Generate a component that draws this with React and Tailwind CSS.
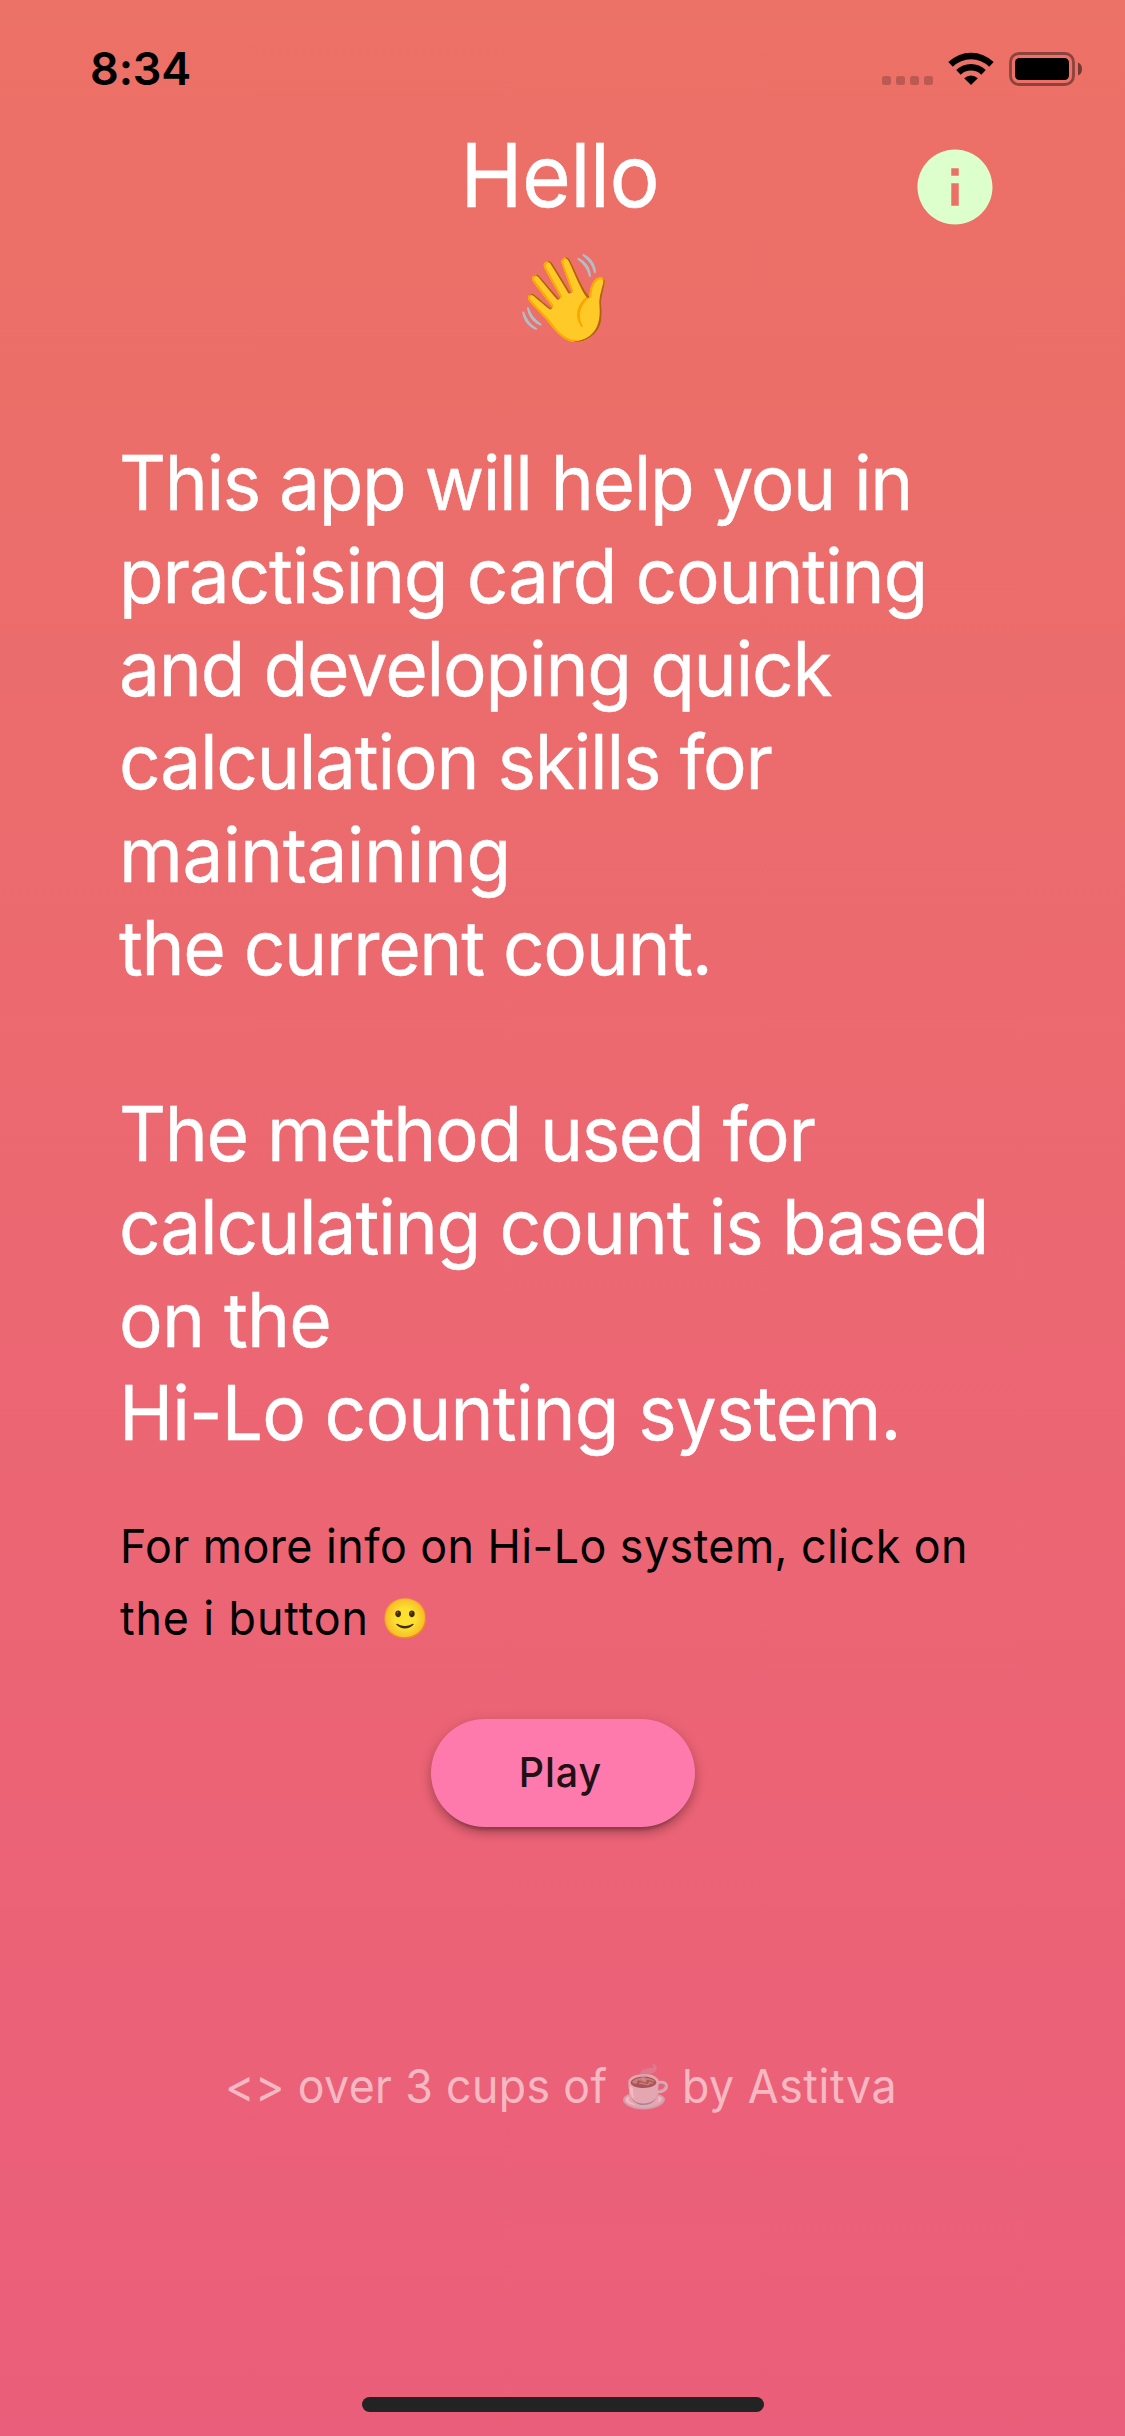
const introLines = [
  { text: "This app will help you in", tracking: "tracking-[-1.43px]" },
  { text: "practising card counting", tracking: "tracking-[-1.25px]" },
  { text: "and developing quick", tracking: "tracking-[-1.26px]" },
  { text: "calculation skills for", tracking: "tracking-[-1.29px]" },
  { text: "maintaining", tracking: "tracking-[-0.52px]" },
  { text: "the current count.", tracking: "tracking-[-1.38px]" },
];

const methodLines = [
  { text: "The method used for", tracking: "tracking-[-1.40px]" },
  { text: "calculating count is based", tracking: "tracking-[-1.2px]" },
  { text: "on the", tracking: "tracking-[-0.85px]" },
  { text: "Hi-Lo counting system.", tracking: "tracking-[-0.93px]" },
];

function Paragraph({ lines }) {
  return (
    <p className="text-[76px] leading-[93px] text-white [-webkit-text-stroke:0.4px_white]">
      {lines.map((line) => (
        <span key={line.text} className={`block origin-left scale-x-[0.96] whitespace-nowrap ${line.tracking}`}>
          {line.text}
        </span>
      ))}
    </p>
  );
}

function SignalDots() {
  return (
    <div className="mt-[76px] flex gap-[5px]">
      {[0, 1, 2, 3].map((dot) => (
        <span key={dot} className="size-[9px] rounded-[2.5px] bg-black/20" />
      ))}
    </div>
  );
}

function WifiIcon() {
  return (
    <svg className="mt-[52px] ml-[15px] h-[33px] w-[46px]" viewBox="0 0 46 33">
      <path d="M0.3 10.1 A32.3 32.3 0 0 1 45.7 10.1 L41.2 14.7 A25.9 25.9 0 0 0 4.8 14.7 Z" />
      <path d="M8.2 18.1 A21.1 21.1 0 0 1 37.8 18.1 L33.3 22.7 A14.7 14.7 0 0 0 12.7 22.7 Z" />
      <path d="M16.2 26.2 A10 10 0 0 1 29.8 26.2 L23 33 Z" />
    </svg>
  );
}

function BatteryIcon() {
  return (
    <svg className="mt-[52px] ml-[15px] h-[34px] w-[74px]" viewBox="0 0 74 34">
      <rect x="1.5" y="1.5" width="63" height="31" rx="8.5" fill="none" stroke="black" strokeWidth="2.8" strokeOpacity="0.4" />
      <rect x="6" y="6" width="54" height="22" rx="4.5" />
      <path d="M69 10.5 Q73 12 73 17 Q73 22 69 23.5 Z" fillOpacity="0.5" />
    </svg>
  );
}

function InfoIcon() {
  return (
    <svg className="size-[90px] fill-[#dcffcc]" viewBox="0 0 24 24">
      <path d="M12 2C6.48 2 2 6.48 2 12s4.48 10 10 10 10-4.48 10-10S17.52 2 12 2zm1 15h-2v-6h2v6zm0-8h-2V7h2v2z" />
    </svg>
  );
}

export default function App() {
  return (
    <div className="flex h-[2436px] w-[1125px] flex-col overflow-hidden bg-linear-to-b from-[#ec7166] to-[#eb5e7b] font-['Inter','Noto_Color_Emoji',sans-serif]">
      <header className="flex h-[132px] shrink-0 items-start">
        <span className="mt-[42px] ml-[90px] text-[45px] leading-[54px] font-semibold tracking-[-0.16px] text-black">
          8:34
        </span>
        <div className="mr-[42px] ml-auto flex">
          <SignalDots />
          <WifiIcon />
          <BatteryIcon />
        </div>
      </header>

      <section className="grid h-[304px] shrink-0 grid-cols-[1fr_auto_1fr] items-start">
        <div className="col-start-2 flex flex-col items-center">
          <h1 className="mt-[-10px] mr-[5px] scale-x-[0.96] text-[87.5px] leading-[106px] tracking-[-0.7px] text-white [-webkit-text-stroke:0.4px_white]">
            Hello
          </h1>
          <span className="mt-[20px] ml-[7px] text-[85px] leading-[100px]">👋</span>
        </div>
        <button className="mt-[10px] mr-[125px] justify-self-end" aria-label="Info">
          <InfoIcon />
        </button>
      </section>

      <main className="flex flex-col pl-[118.5px]">
        <div className="flex flex-col gap-[93px]">
          <Paragraph lines={introLines} />
          <Paragraph lines={methodLines} />
        </div>
        <p className="mt-[51px] text-[46.7px] leading-[72px] whitespace-nowrap text-black">
          <span className="block origin-left scale-x-[0.96] pl-px tracking-[0.46px]">For more info on Hi-Lo system, click on</span>
          <span className="flex h-[72px]">
            <span className="w-[263px] origin-left scale-x-[0.96] pl-px tracking-[0.91px]">the i button</span>
            <span className="text-[39px]">🙂</span>
          </span>
        </p>
      </main>

      <button className="mt-[65px] ml-[430.5px] flex h-[108px] w-[264px] shrink-0 items-center justify-center rounded-full bg-[#ff7aac] text-[41px] font-medium text-[#211014] shadow-[0_9px_3px_-6px_rgba(0,0,0,0.2),0_6px_10px_0_rgba(0,0,0,0.2),0_3px_15px_0_rgba(0,0,0,0.12)]">
        <span className="mr-[4px] scale-x-[0.96] tracking-[1px]">Play</span>
      </button>

      <footer className="mt-[223px] flex h-[72px] shrink-0 pl-[225px] text-[46.5px] leading-[72px] whitespace-nowrap text-white opacity-55">
        <span className="w-[395px] origin-left scale-x-[0.96] tracking-[0.4px]">&lt;&gt; over 3 cups of</span>
        <span className="w-[62px] text-[41px]">☕</span>
        <span className="origin-left scale-x-[0.96] tracking-[0.6px]">by Astitva</span>
      </footer>

      <div className="mt-auto mb-[24px] h-[15px] w-[402px] shrink-0 self-center rounded-full bg-[#232323]" />
    </div>
  );
}
